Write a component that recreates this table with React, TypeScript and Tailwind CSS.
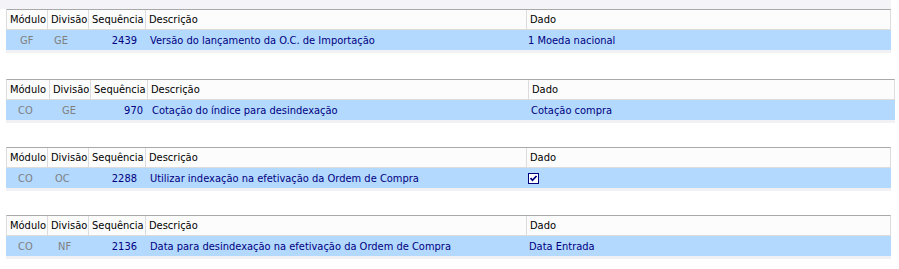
import React from "react";

type Row = {
  mod: string;
  div: string;
  seq: string;
  desc: string;
  dado: React.ReactNode;
};

type Table = {
  wrap: string;
  cols: string[]; // widths of Módulo, Divisão, Sequência, Descrição, Dado
  pad: string[]; // value offsets for the same columns
  row: Row;
};

const HEADERS = ["Módulo", "Divisão", "Sequência", "Descrição", "Dado"];

const STD = ["w-[41px]", "w-[41px]", "w-[57px]", "w-[381px]", "w-[363px]"];

const TABLES: Table[] = [
  {
    wrap: "mt-[9px]",
    cols: STD,
    pad: ["pl-[13px]", "pl-[6px]", "pr-[9px]", "pl-[4px]", "pl-[1px]"],
    row: { mod: "GF", div: "GE", seq: "2439", desc: "Versão do lançamento da O.C. de Importação", dado: "1 Moeda nacional" },
  },
  {
    wrap: "mt-[26px]",
    cols: ["w-[43px]", "w-[41px]", "w-[57px]", "w-[381px]", "w-[365px]"],
    pad: ["pl-[11px]", "pl-[12px]", "pr-[5px]", "pl-[4px]", "pl-[2px]"],
    row: { mod: "CO", div: "GE", seq: "970", desc: "Cotação do índice para desindexação", dado: "Cotação compra" },
  },
  {
    wrap: "mt-[24px]",
    cols: STD,
    pad: ["pl-[11px]", "pl-[7px]", "pr-[9px]", "pl-[4px]", "pl-[1px]"],
    row: { mod: "CO", div: "OC", seq: "2288", desc: "Utilizar indexação na efetivação da Ordem de Compra", dado: <Checkbox /> },
  },
  {
    wrap: "mt-[24px]",
    cols: STD,
    pad: ["pl-[11px]", "pl-[10px]", "pr-[9px]", "pl-[4px]", "pl-[2px]"],
    row: { mod: "CO", div: "NF", seq: "2136", desc: "Data para desindexação na efetivação da Ordem de Compra", dado: "Data Entrada" },
  },
];

function Checkbox() {
  return (
    <span className="inline-flex w-[11px] h-[11px] border border-[#000080] bg-white items-center justify-center">
      <svg width="9" height="9" viewBox="0 0 9 9">
        <path d="M1.5 4.2 L3.5 6.3 L7.5 2" stroke="#000080" strokeWidth="1.8" fill="none" />
      </svg>
    </span>
  );
}

function Grid({ t }: { t: Table }) {
  const [mod, div, seq, desc, dado] = t.cols;
  const [pMod, pDiv, pSeq, pDesc, pDado] = t.pad;
  return (
    <div className={`ml-[6px] flex flex-col w-max ${t.wrap}`}>
      {/* Header */}
      <div className="flex h-[21px] bg-[#fcfcfc] border border-[#dcdcdc] border-t-[#a9a9a9]">
        {HEADERS.map((h, i) => (
          <div
            key={h}
            className={`flex items-center pl-[3px] text-black ${t.cols[i]} ${i < 4 ? "border-r border-[#dcdcdc]" : ""}`}
          >
            {h}
          </div>
        ))}
      </div>

      {/* Selected row */}
      <div className="flex h-[20px] items-center bg-[#b3d9ff] pl-px pr-px">
        <div className={`${mod} ${pMod} text-[#808080]`}>{t.row.mod}</div>
        <div className={`${div} ${pDiv} text-[#808080]`}>{t.row.div}</div>
        <div className={`${seq} ${pSeq} text-right text-[#000080]`}>{t.row.seq}</div>
        <div className={`${desc} ${pDesc} text-[#000080]`}>{t.row.desc}</div>
        <div className={`${dado} ${pDado} flex items-center text-[#000080]`}>{t.row.dado}</div>
      </div>

      <div className="h-[3px] bg-[#f0f0f5]" />
    </div>
  );
}

export default function App() {
  return (
    <div className="relative w-[899px] h-[269px] bg-white overflow-hidden text-[11px] leading-none whitespace-nowrap font-['DejaVu_Sans_Condensed','DejaVu_Sans',sans-serif]">
      {/* light band above the first grid */}
      <div className="absolute top-0 left-0 w-[891px] h-[9px] bg-[#f3f3f8]" />
      {TABLES.map((t, i) => (
        <Grid key={i} t={t} />
      ))}
    </div>
  );
}
